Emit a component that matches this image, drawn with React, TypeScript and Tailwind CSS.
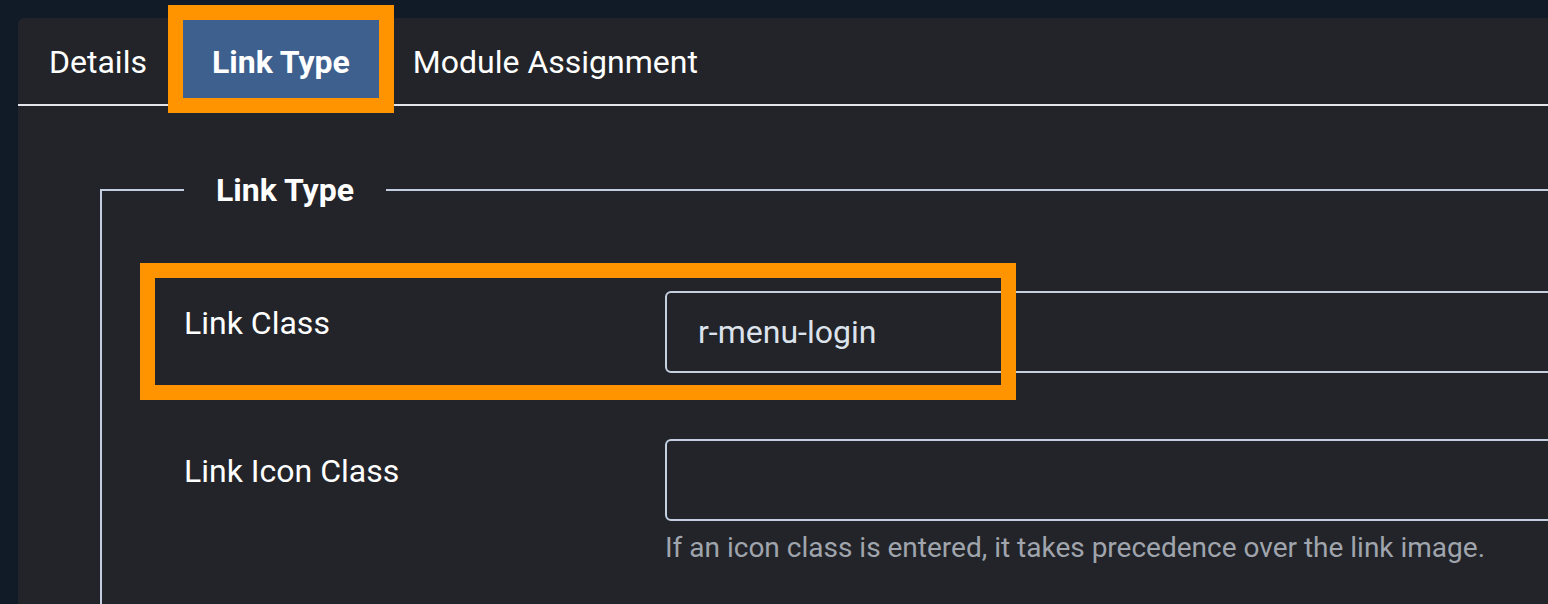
import { useState } from "react";

const tabs = ["Details", "Link Type", "Module Assignment"];

const App = () => {
  const [active] = useState("Link Type");

  return (
    <div className="h-[604px] w-full overflow-hidden bg-[#111a27] pt-[18px] pl-[18px] font-['Roboto',_'Liberation_Sans',_sans-serif]">
      <div className="h-[700px] w-[1700px] rounded-tl-[6px] bg-[#222429]">
        {/* tab bar */}
        <nav className="flex h-[88px] items-start border-b-2 border-[#e2e5ea]">
          {tabs.map((tab, i) => (
            <button
              key={tab}
              className={
                (tab === active
                  ? "ml-[5px] bg-[#3e608f] font-bold ring-[15px] ring-[#ff9400] px-[29px] "
                  : i === 0
                    ? "px-[31px] "
                    : "ml-[4px] px-[30px] ") +
                "mt-[2px] h-[78px] pt-[6px] text-[32px] leading-[72px] text-white"
              }
            >
              {tab}
            </button>
          ))}
        </nav>

        <div className="pt-[64px] pl-[82px]">
          <fieldset className="border-2 border-[#c2cddf] pt-[81px] pb-[60px]">
            <legend className="ml-[82px] px-[32px] text-[32px] leading-[40px] font-bold text-white">
              Link Type
            </legend>

            {/* Link Class */}
            <div className="relative flex items-start pl-[82px]">
              <label className="mt-[12px] w-[481px] shrink-0 text-[32px] leading-[40px] text-white">
                Link Class
              </label>
              <input
                readOnly
                defaultValue="r-menu-login"
                className="h-[82px] w-[1000px] rounded-[6px] border-2 border-[#c4cfe0] bg-transparent px-[31px] text-[32px] text-[#dde3ec] outline-none"
              />
              <div className="pointer-events-none absolute top-[-28px] left-[38px] h-[137px] w-[876px] border-[15px] border-[#ff9400]" />
            </div>

            {/* Link Icon Class */}
            <div className="mt-[66px] flex items-start pl-[82px]">
              <label className="mt-[12px] w-[481px] shrink-0 text-[32px] leading-[40px] text-white">
                Link Icon Class
              </label>
              <div className="flex flex-col">
                <input
                  readOnly
                  defaultValue=""
                  className="h-[82px] w-[1000px] rounded-[6px] border-2 border-[#c4cfe0] bg-transparent px-[31px] text-[32px] text-[#dde3ec] outline-none"
                />
                <p className="mt-[11px] text-[28px] leading-[32px] text-[#a0a5ad]">
                  If an icon class is entered, it takes precedence over the link image.
                </p>
              </div>
            </div>
          </fieldset>
        </div>
      </div>
    </div>
  );
};

export default App;
